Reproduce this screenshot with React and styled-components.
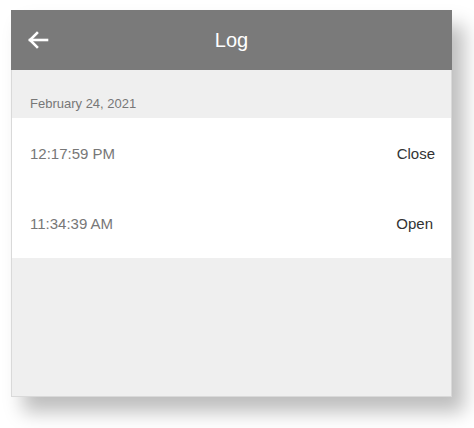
import React from 'react';
import styled, { createGlobalStyle } from 'styled-components';

const GlobalStyle = createGlobalStyle`
  body {
    margin: 0;
    background: #ffffff;
    font-family: "Liberation Sans", Arial, sans-serif;
  }
`;

const Page = styled.div`
  min-height: 428px;
  box-sizing: border-box;
  padding: 10px 0 0 11px;
`;

const Panel = styled.div`
  width: 441px;
  height: 387px;
  box-sizing: border-box;
  background: #efefef;
  border: 1px solid #d9d9d9;
  border-top: none;
  box-shadow: 12px 15px 18px rgba(0, 0, 0, 0.26);
  display: flex;
  flex-direction: column;
`;

const Header = styled.header`
  height: 60px;
  margin: 0 -1px;
  background: #7a7a7a;
  display: grid;
  grid-template-columns: 60px 1fr 60px;
  align-items: center;
`;

const BackButton = styled.button`
  border: none;
  background: none;
  padding: 0 0 0 16px;
  height: 100%;
  display: flex;
  align-items: center;
  cursor: pointer;
`;

const Title = styled.h1`
  margin: 0;
  text-align: center;
  color: #ffffff;
  font-size: 20px;
  font-weight: normal;
`;

const DateLabel = styled.div`
  height: 48px;
  box-sizing: border-box;
  padding: 26px 0 0 18px;
  font-size: 13px;
  color: #777777;
`;

const List = styled.ul`
  list-style: none;
  margin: 0;
  padding: 0;
  background: #ffffff;
`;

const Row = styled.li`
  height: 69px;
  display: flex;
  align-items: center;
  justify-content: space-between;
  padding: 1px ${(p) => p.$right}px 0 18px;
`;

const Time = styled.span`
  font-size: 15px;
  color: #777777;
`;

const Action = styled.span`
  font-size: 15px;
  color: #333333;
`;

const entries = [
  { time: '12:17:59 PM', action: 'Close', right: 16 },
  { time: '11:34:39 AM', action: 'Open', right: 18 },
];

const App = () => (
  <Page>
    <GlobalStyle />
    <Panel>
      <Header>
        <BackButton aria-label="Back">
          <svg width="22" height="18" viewBox="0 0 22 18" fill="none" stroke="#ffffff" strokeWidth="2.6" strokeLinecap="square">
            <path d="M3 9H20" />
            <path d="M10 2L3 9L10 16" />
          </svg>
        </BackButton>
        <Title>Log</Title>
        <span />
      </Header>
      <DateLabel>February 24, 2021</DateLabel>
      <List>
        {entries.map((e) => (
          <Row key={e.time} $right={e.right}>
            <Time>{e.time}</Time>
            <Action>{e.action}</Action>
          </Row>
        ))}
      </List>
    </Panel>
  </Page>
);

export default App;
